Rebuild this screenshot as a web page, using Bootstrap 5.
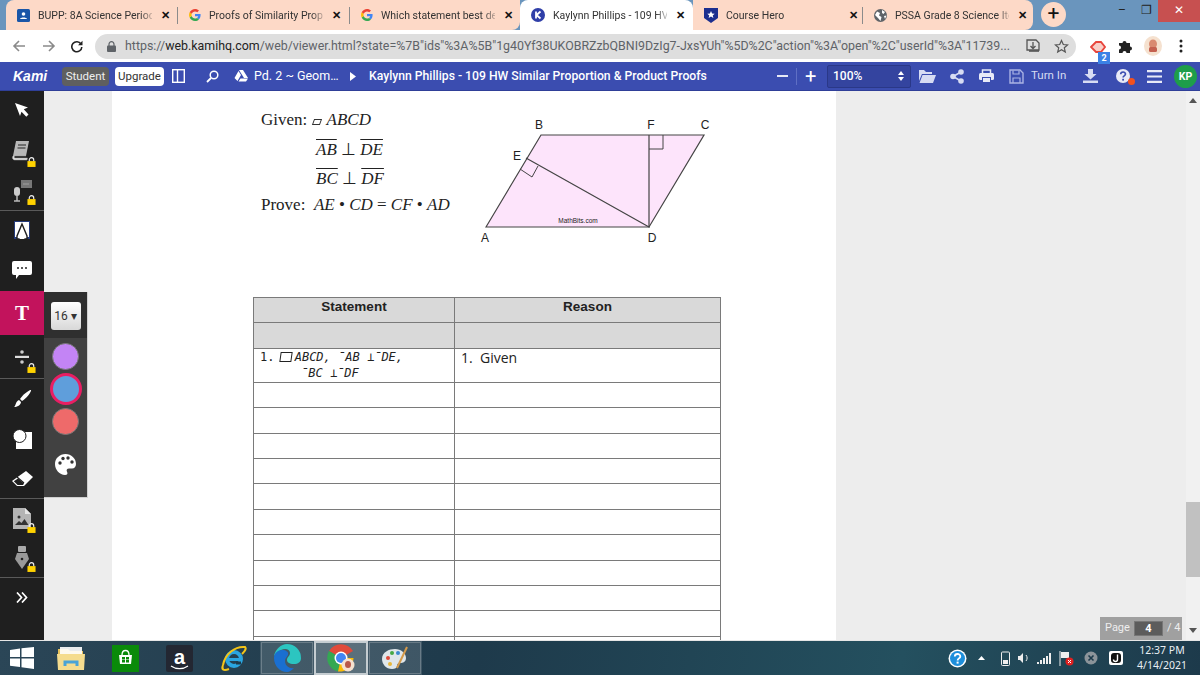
<!DOCTYPE html>
<html lang="en">
<head>
  <meta charset="UTF-8">
  <title>Kami</title>
  <link href="https://cdn.jsdelivr.net/npm/bootstrap@5.3.0/dist/css/bootstrap.min.css" rel="stylesheet">
  <style>
    html,body{height:675px;overflow:hidden}
    body{width:1200px;font-family:"Roboto",sans-serif;background:#ededed}

    /* ---------- Chrome tabs ---------- */
    .tabstrip{height:30px;background:#6a95bd;padding-left:6px}
    .gtab{height:30px;background:#fdd9c7;padding-left:11px;font:10.5px "Roboto",sans-serif;color:#333;flex:none;width:172px;position:relative}
    .gtab.first{border-radius:8px 0 0 0}
    .gtab.last{border-radius:0 8px 8px 0;width:170px}
    .gtab.tab3{border-radius:0 0 8px 0;width:170px}
    .gtab.on{background:#fff;border-radius:8px 8px 0 0;width:173px}
    .gtab.nar{width:170px}
    .gtab.sep::after{content:"";position:absolute;right:0;top:7px;height:17px;border-right:1px solid #8b8b8b}
    .gtab .lbl{width:114px;margin-left:8px;white-space:nowrap;-webkit-mask-image:linear-gradient(90deg,#000 90%,rgba(0,0,0,.25));mask-image:linear-gradient(90deg,#000 90%,rgba(0,0,0,.25))}
    .gtab .cls{font-size:11px;font-weight:700;color:#111;margin-left:9px;line-height:1}
    .newtab{width:25px;height:25px;border-radius:50%;background:#fdd9c7;margin:2px 0 0 8px;font-size:21px;line-height:23px;text-align:center;color:#111}
    .winbtns{margin-left:auto;height:22px}
    .winbtns div{width:24px;text-align:center;color:#222;font-size:12px;line-height:20px}
    .winbtns .wclose{width:42px;background:#c75050;color:#fff}

    /* ---------- Address bar ---------- */
    .addr{height:32px;background:#fff;padding-left:12px}
    .rl{margin-left:14px}
    .urlbar{margin-left:12px;width:981px;height:25px;background:#dedede;border-radius:13px;padding-left:12px;font-size:12.4px;color:#5f6368;white-space:nowrap}
    .urlbar b{font-weight:400;color:#222}
    .urlbar .utxt{margin-left:9px}
    .urlbar .utail{margin-left:auto;padding-right:7px;gap:14px}
    .extbadge{position:absolute;right:-4px;bottom:-6px;background:#3b82e6;color:#fff;font-size:9px;width:12px;height:12px;line-height:12px;text-align:center;font-weight:700}
    .m-ext{margin-left:14px}
    .m-puz{margin-left:12px}
    .m-ava{margin-left:11px}
    .m-dots{margin-left:17px}

    /* ---------- Kami toolbar ---------- */
    .kamibar{height:29px;background:#3b4db0;color:#fff;font-size:12.2px;font-weight:500;border-bottom:1px solid #2f3f98;white-space:nowrap}
    .kamilogo{margin-left:13px;font:italic 700 14px "Liberation Sans",sans-serif;width:49px}
    .pillgrey,.pillwhite{font-size:11.5px;font-weight:400;height:19px;line-height:19px;border-radius:4px;text-align:center}
    .pillgrey{background:#5f5f5f;width:47px;color:#eee}
    .pillwhite{background:#fff;color:#333;width:49px;margin-left:6px}
    .w-panel{margin-left:8px}
    .w-search{margin-left:21px}
    .w-drive{margin-left:15px}
    .crumb{margin-left:6px;width:85px;font-weight:400;font-size:12.5px}
    .w-tri{margin-left:11px}
    .doc-title{margin-left:13px;width:350px}
    .w-minus{margin-left:58px;width:11px;height:2px;background:#e6e8f5}
    .bar-sep{margin-left:8px;height:17px;border-left:1px solid #5f6fc4}
    .w-plus{margin-left:8px;font-size:20px;font-weight:400;line-height:1;width:12px}
    .zoombox{margin-left:10px;width:84px;height:23px;background:#34449f;border:1px solid #2a3888;border-radius:2px;font-size:12px;padding:0 6px 0 5px}
    .w-folder{margin-left:8px}
    .w-share{margin-left:14px}
    .w-print{margin-left:15px}
    .w-save{margin-left:15px}
    .turnin{margin-left:7px;font-size:11.5px;font-weight:400;color:#d7dbf2;width:38px}
    .w-down{margin-left:14px}
    .w-help{margin-left:18px;position:relative}
    .helpdot{position:absolute;right:-5px;bottom:-2px;width:7px;height:7px;border-radius:50%;background:#f4511e}
    .w-menu{margin-left:17px}
    .kpbadge{margin-left:12px;width:23px;height:23px;border-radius:50%;background:#1e9e4a;font-size:10.5px;font-weight:700;line-height:23px;text-align:center}

    /* ---------- Work area ---------- */
    .workarea{height:549px;position:relative;overflow:hidden}
    .toolrail{width:44px;background:#1f1f1f;flex:none;z-index:3}
    .tool{width:44px;display:flex;align-items:center;justify-content:center;position:relative}
    .h38{height:38px}.h39{height:39px}.h40{height:40px}.h42{height:42px}.h43{height:43px}.h44{height:44px}
    .tool.line{border-bottom:1px solid #5a5a5a}
    .tool.active{background:#c2135c}
    .tool .padlock{position:absolute;right:8px;bottom:5px}
    .t-glyph{font:700 21px "Liberation Serif",serif;color:#fff;line-height:1}
    .optpanel{position:absolute;left:44px;top:201px;width:44px;height:206px;background:#414141;border-right:1px solid #d0d0d0;border-bottom:1px solid #d0d0d0;z-index:2}
    .optsize{height:46px;background:#2f2f2f;padding-top:10px}
    .sizebtn{width:30px;height:28px;margin:0 auto;background:linear-gradient(#fff,#d8d8d8);border-radius:3px;font-size:12px;color:#333;line-height:28px;text-align:center}
    .swatch{width:27px;height:27px;border-radius:50%;margin:0 auto;border:1px solid #777}
    .sw1{background:#c384f5;margin-top:5px}
    .sw2{background:#5f9edb;width:32px;height:32px;border:3px solid #e91e63;margin-top:3px;margin-bottom:3px}
    .sw3{background:#ee6a6a}
    .sw4{margin-top:17px;text-align:center}
    .pagearea{flex:1;padding-left:68px;min-width:0}
    .docpage{width:724px;height:600px;background:#fff;padding-left:141px}
    .givenrow{height:206px;font:17px "Liberation Serif",serif;color:#222}
    .given{width:220px;margin-left:8px;padding-top:16px}
    .given .gl{height:29px;line-height:26px;white-space:nowrap}
    .given .gl.g1{height:30px}
    .given .gl.ind{padding-left:55px}
    .given .gl.g3{height:26px}
    .over{text-decoration:overline;text-decoration-thickness:1px}
    .para{display:inline-block;width:8px;height:6px;border:1px solid #333;transform:skewX(-20deg);margin:0 6px 0 1px}
    .figure-svg{margin-left:-4px;margin-top:9px}
    .prooftable{width:468px;table-layout:fixed;border-collapse:collapse;margin:0;font:14px "Open Sans",sans-serif;color:#222;--bs-table-bg:transparent}
    .prooftable td,.prooftable th{border:1px solid #7a7a7a;padding:0;height:25.4px}
    .prooftable .colA{width:201px}
    .prooftable .grey td,.prooftable .grey th{background:#d9d9d9}
    .prooftable th{font:700 13.5px "Liberation Sans",sans-serif;text-align:center;vertical-align:top;padding-top:1px}
    .prooftable .tall td{height:34px;vertical-align:top;padding:0 0 0 6px;line-height:17px}
    .stmt{font:italic 12px/16px "DejaVu Sans Mono",monospace;white-space:pre}
    .stmt span{font-style:normal}
    .stmt .l2{padding-left:41px}
    .sqr{display:inline-block;width:12px;height:10px;border:1px solid #222;margin:0 3px -1px -2px;transform:skewX(-8deg)}
    .scrolltrack{width:14px;position:absolute;right:0;top:0;bottom:0;background:#f1f1f1;z-index:1}
    .scrollthumb{position:absolute;left:0;right:0;top:411px;height:75px;background:#c1c1c1}
    .arrowup,.arrowdown{position:absolute;left:3px;width:0;height:0;border-left:4px solid transparent;border-right:4px solid transparent}
    .arrowup{top:7px;border-bottom:5px solid #555}
    .arrowdown{bottom:7px;border-top:5px solid #555}
    .pagebox{position:absolute;left:1100px;top:526px;width:82px;height:23px;background:#a0a0a0;color:#eee;font-size:11px;z-index:2;padding-left:5px;white-space:nowrap}
    .pagebox .num{flex:none;width:29px;height:15px;margin:0 4px;background:#5c5c5c;border:1px solid #777;text-align:center;line-height:13px;font-weight:700;color:#fff}

    /* ---------- Windows taskbar ---------- */
    .taskbar{height:35px;border-top:1px solid #e6e6e6;background:linear-gradient(100deg,#2b4657,#1e3a4b 40%,#24505f 75%,#1d3a4b);color:#e8eef2}
    .slot{width:54px;height:34px;display:flex;align-items:center;justify-content:center;flex:none}
    .slot.win{width:44px}
    .slot.box{background:rgba(255,255,255,.14);outline:1px solid rgba(255,255,255,.22);outline-offset:-2px}
    .slot.box.cur{background:rgba(255,255,255,.26);outline:2px solid rgba(255,255,255,.65)}
    .tray{margin-left:auto;gap:0}
    .tray-i{flex:none;display:flex;justify-content:center;align-items:center}
    .tw-help{width:20px}
    .tw-caret{width:10px;margin-left:9px}
    .tw-bat{width:10px;margin-left:14px}
    .tw-spk{width:12px;margin-left:7px}
    .tw-sig{width:16px;margin-left:7px}
    .tw-flag{width:16px;margin-left:6px}
    .tw-x{width:14px;margin-left:10px}
    .tw-j{width:14px;margin-left:11px}
    .clock{width:58px;margin-left:10px;margin-right:9px;font:10.5px/15px "Noto Sans",sans-serif;text-align:center}
  </style>
</head>
<body class="d-flex flex-column">
  <svg width="0" height="0" class="position-absolute">
    <symbol id="lock" viewBox="0 0 10 11"><path d="M2.5 5V3.2a2.5 2.5 0 0 1 5 0V5" fill="none" stroke="#eee" stroke-width="1.3"/><rect x="0.5" y="4.5" width="9" height="6.5" fill="#ffd200"/></symbol>
    <symbol id="gee" viewBox="0 0 12 12"><path d="M11.6 6.1c0-.4 0-.8-.1-1.1H6v2.2h3.2c-.2.7-.6 1.3-1.200 1.700l1.900 1.500c1.100-1 1.700-2.500 1.700-4.300z" fill="#4285f4"/><path d="M6 12c1.600 0 2.900-.5 3.900-1.500L8 9c-.5.4-1.200.6-2 .6-1.500 0-2.900-1-3.300-2.500l-2 1.500C1.700 10.700 3.700 12 6 12z" fill="#34a853"/><path d="M2.700 7.100a3.700 3.700 0 0 1 0-2.300l-2-1.500a6 6 0 0 0 0 5.300z" fill="#fbbc05"/><path d="M6 2.400c.9 0 1.700.3 2.300.9l1.700-1.700C9 .6 7.600 0 6 0 3.700 0 1.700 1.300.7 3.300l2 1.500C3.100 3.400 4.500 2.400 6 2.400z" fill="#ea4335"/></symbol>
  </svg>

  <!-- onglets -->
  <div class="tabstrip d-flex flex-none">
    <div class="gtab first sep d-flex align-items-center">
      <svg width="13" height="13" viewBox="0 0 13 13"><rect width="13" height="13" rx="1.500" fill="#1a56a8"/><circle cx="6.500" cy="5" r="1.800" fill="#fff"/><path d="M3 10c.3-2 6.700-2 7 0z" fill="#fff"/></svg>
      <div class="lbl">BUPP: 8A Science Period</div><div class="cls">✕</div>
    </div>
    <div class="gtab sep d-flex align-items-center">
      <svg width="12" height="12"><use href="#gee"/></svg>
      <div class="lbl">Proofs of Similarity Prop</div><div class="cls">✕</div>
    </div>
    <div class="gtab tab3 d-flex align-items-center">
      <svg width="12" height="12"><use href="#gee"/></svg>
      <div class="lbl">Which statement best de</div><div class="cls">✕</div>
    </div>
    <div class="gtab on d-flex align-items-center">
      <svg width="14" height="14" viewBox="0 0 14 14"><circle cx="7" cy="7" r="7" fill="#2f3fa8"/><path d="M5 3.500v7M9.500 3.500 5.500 7l4 3.500" stroke="#fff" stroke-width="1.800" fill="none"/></svg>
      <div class="lbl">Kaylynn Phillips - 109 HV</div><div class="cls">✕</div>
    </div>
    <div class="gtab nar sep d-flex align-items-center">
      <svg width="14" height="15" viewBox="0 0 14 15"><path d="M0 0h14v10l-7 5-7-5z" fill="#1c2f8f"/><path d="m7 3 1.100 2.500 2.600.2-2 1.700.7 2.600L7 8.600 4.600 10l.7-2.600-2-1.700 2.600-.2z" fill="#fff"/></svg>
      <div class="lbl">Course Hero</div><div class="cls">✕</div>
    </div>
    <div class="gtab last d-flex align-items-center">
      <svg width="13" height="13" viewBox="0 0 13 13"><circle cx="6.500" cy="6.500" r="6.500" fill="#5f6368"/><path d="M3 2.500 6 4 5 6.500 7.500 8 6.500 12 4 9 1 6zM8 1l3 2-1.500 2L8 4zM10 7l2.500-.5L11 10z" fill="#fff"/></svg>
      <div class="lbl">PSSA Grade 8 Science Ite</div><div class="cls">✕</div>
    </div>
    <div class="newtab">+</div>
    <div class="winbtns d-flex">
      <div>–</div>
      <div>❐</div>
      <div class="wclose">✕</div>
    </div>
  </div>

  <!-- barre d'adresse -->
  <div class="addr d-flex align-items-center flex-none">
    <svg width="14" height="14" viewBox="0 0 14 14"><path d="M13 7H2M7 2 2 7l5 5" fill="none" stroke="#8a8a8a" stroke-width="1.600"/></svg>
    <svg class="ms-3" width="14" height="14" viewBox="0 0 14 14"><path d="M1 7h11M7 2l5 5-5 5" fill="none" stroke="#8a8a8a" stroke-width="1.600"/></svg>
    <svg class="rl" width="13" height="13" viewBox="0 0 13 13"><path d="M11 4a5 5 0 1 0 .8 3" fill="none" stroke="#222" stroke-width="1.600"/><path d="M12.500 .8v4.400H8z" fill="#222"/></svg>
    <div class="urlbar d-flex align-items-center">
      <svg width="9" height="11" viewBox="0 0 9 11"><path d="M2 5V3.200a2.500 2.500 0 0 1 5 0V5" fill="none" stroke="#5f6368" stroke-width="1.200"/><rect y="4.500" width="9" height="6.500" rx="1" fill="#5f6368"/></svg>
      <div class="utxt">https://<b>web.kamihq.com</b>/web/viewer.html?state=%7B"ids"%3A%5B"1g40Yf38UKOBRZzbQBNI9DzIg7-JxsYUh"%5D%2C"action"%3A"open"%2C"userId"%3A"11739...</div>
      <div class="utail d-flex align-items-center">
        <svg width="14" height="14" viewBox="0 0 14 14"><path d="M1 1h9l3 3v7H1z" fill="none" stroke="#555" stroke-width="1.300"/><path d="M7 3v6M4.500 7 7 9.500 9.500 7" fill="none" stroke="#555" stroke-width="1.300"/><path d="M3 12h10" stroke="#555" stroke-width="1.600"/></svg>
        <svg width="15" height="15" viewBox="0 0 15 15"><path d="m7.500 1.500 1.800 4 4.300.4-3.300 2.900 1 4.200-3.800-2.200-3.800 2.200 1-4.200L1.400 5.900l4.300-.4z" fill="none" stroke="#555" stroke-width="1.200"/></svg>
      </div>
    </div>
    <div class="position-relative m-ext">
      <svg width="16" height="14" viewBox="0 0 16 14"><path d="M1 7 6 2h5l4 5-4 5H6z" fill="#f8cfc8" stroke="#e8453c" stroke-width="1.800"/></svg>
      <span class="extbadge">2</span>
    </div>
    <svg class="m-puz" width="15" height="15" viewBox="0 0 15 15"><path d="M1 4h3.500a2 2 0 1 1 4 0H12v3.500a2 2 0 1 1 0 4V14H8.500a2 2 0 1 0-4 0H1v-3.500a2 2 0 1 0 0-4z" fill="#222"/></svg>
    <svg class="m-ava" width="18" height="20" viewBox="0 0 18 20"><ellipse cx="9" cy="10" rx="9" ry="10" fill="#f5e1cf"/><ellipse cx="9" cy="8" rx="4" ry="4.500" fill="#d98a70"/><rect x="5" y="11" width="8" height="5" rx="1.500" fill="#c4604f"/></svg>
    <svg class="m-dots" width="4" height="14" viewBox="0 0 4 14"><circle cx="2" cy="2" r="1.500" fill="#222"/><circle cx="2" cy="7" r="1.500" fill="#222"/><circle cx="2" cy="12" r="1.500" fill="#222"/></svg>
  </div>

  <!-- barre Kami -->
  <div class="kamibar d-flex align-items-center flex-none">
    <div class="kamilogo">Kami</div>
    <div class="pillgrey">Student</div>
    <div class="pillwhite">Upgrade</div>
    <svg class="w-panel" width="13" height="14" viewBox="0 0 13 14"><rect x=".7" y=".7" width="11.600" height="12.600" fill="none" stroke="#fff" stroke-width="1.400"/><path d="M5.500 1v12" stroke="#fff" stroke-width="1.400"/></svg>
    <svg class="w-search" width="13" height="13" viewBox="0 0 13 13"><circle cx="8" cy="5" r="3.800" fill="none" stroke="#fff" stroke-width="1.500"/><path d="M5 8 1 12" stroke="#fff" stroke-width="1.800"/></svg>
    <svg class="w-drive" width="14" height="12" viewBox="0 0 14 12"><path d="M5 0h4l5 8H10zM4.500 1 7 5 3.500 11 .5 8zM4.500 11.500l2-3H14l-2 3z" fill="#fff"/></svg>
    <div class="crumb">Pd. 2 ~ Geom…</div>
    <svg class="w-tri" width="6" height="9" viewBox="0 0 6 9"><path d="M0 0l6 4.500L0 9z" fill="#fff"/></svg>
    <div class="doc-title">Kaylynn Phillips - 109 HW Similar Proportion &amp; Product Proofs</div>
    <div class="w-minus"></div>
    <div class="bar-sep"></div>
    <div class="w-plus">+</div>
    <div class="zoombox d-flex align-items-center justify-content-between">
      <span>100%</span>
      <svg width="6" height="10" viewBox="0 0 6 10"><path d="M3 0l3 4H0zM3 10l3-4H0z" fill="#fff"/></svg>
    </div>
    <svg class="w-folder" width="17" height="14" viewBox="0 0 17 14"><path d="M0 1h5l2 2h6v2H3L0 12z" fill="#d7dcf3"/><path d="M3.500 6H17l-3 8H.5z" fill="#d7dcf3"/></svg>
    <svg class="w-share" width="14" height="15" viewBox="0 0 14 15"><path d="M11 3 3 7.500l8 4.500" fill="none" stroke="#d7dcf3" stroke-width="1.600"/><circle cx="11" cy="3" r="2.800" fill="#d7dcf3"/><circle cx="3" cy="7.500" r="2.800" fill="#d7dcf3"/><circle cx="11" cy="12" r="2.800" fill="#d7dcf3"/></svg>
    <svg class="w-print" width="15" height="14" viewBox="0 0 15 14"><path d="M3.500 4V1h8v3" fill="none" stroke="#e8eaf7" stroke-width="1.500"/><rect y="4" width="15" height="7" rx="1.500" fill="#e8eaf7"/><rect x="3.500" y="8.500" width="8" height="5" fill="#e8eaf7" stroke="#3b4db0"/></svg>
    <svg class="w-save" width="15" height="15" viewBox="0 0 15 15"><path d="M1 1h10l3 3v10H1z" fill="none" stroke="#aab3e4" stroke-width="1.400"/><path d="M4 1.500v3.500h6V1.500M4 14V9h7v5" fill="none" stroke="#aab3e4" stroke-width="1.200"/></svg>
    <div class="turnin">Turn In</div>
    <svg class="w-down" width="15" height="14" viewBox="0 0 15 14"><path d="M5 0h5v5h3.500l-6 5.500-6-5.500H5z" fill="#d7dcf3"/><rect y="11.500" width="15" height="2.500" fill="#d7dcf3"/></svg>
    <div class="w-help d-flex">
      <svg width="14" height="14" viewBox="0 0 14 14"><circle cx="7" cy="7" r="7" fill="#e8eaf7"/><path d="M4.700 5.300c0-3 4.800-3 4.800-.2 0 1.800-2.400 1.800-2.400 3.400" fill="none" stroke="#3b4db0" stroke-width="1.600"/><rect x="6.200" y="9.800" width="1.800" height="1.800" fill="#3b4db0"/></svg>
      <span class="helpdot"></span>
    </div>
    <svg class="w-menu" width="15" height="13" viewBox="0 0 15 13"><path d="M0 1.200h15M0 6.500h15M0 11.800h15" stroke="#e8eaf7" stroke-width="2.200"/></svg>
    <div class="kpbadge">KP</div>
  </div>

  <!-- zone de travail -->
  <div class="workarea d-flex flex-none">
    <div class="toolrail">
      <div class="tool h38"><svg width="16" height="16" viewBox="0 0 16 16"><path d="M1 1l13 4.500-4.200 1.800 4.700 5.200-2.200 2.200-4.800-5L6 14z" fill="#fff"/></svg></div>
      <div class="tool h43"><svg width="24" height="24" viewBox="0 0 24 24"><path d="M6 2h13l-3 15H3z" fill="#b8b8b8"/><path d="M3 17c-1.500 2 0 4 2 4h12l.5-2H5c-1 0-1-2 0-2h11" fill="#ddd" stroke="#999" stroke-width=".5"/><path d="M8 6h8M7.500 9h8" stroke="#555" stroke-width="1.300"/></svg><svg class="padlock" width="9" height="10"><use href="#lock"/></svg></div>
      <div class="tool h39 line"><svg width="24" height="24" viewBox="0 0 24 24"><rect x="11" y="1" width="11" height="8" fill="#777"/><path d="M13.500 5h6" stroke="#ccc" stroke-dasharray="1 1"/><rect x="4" y="8" width="6" height="9" rx="3" fill="#ccc"/><path d="M7 17v5M4 22h6" stroke="#bbb" stroke-width="1.500"/></svg><svg class="padlock" width="9" height="10"><use href="#lock"/></svg></div>
      <div class="tool h38"><svg width="16" height="18" viewBox="0 0 16 18"><path d="M0 0h16v18H0z" fill="#243a7a"/><path d="M1 1h14v15H1z" fill="#fff"/><path d="M8 3 3 15v3h10v-3z" fill="#fff" stroke="#1f1f1f" stroke-width="1.400"/><path d="M5.500 18 8 9l2.500 9z" fill="#fff"/></svg></div>
      <div class="tool h42"><svg width="20" height="18" viewBox="0 0 20 18"><path d="M2 0h16a2 2 0 0 1 2 2v10a2 2 0 0 1-2 2H7l-3 4v-4H2a2 2 0 0 1-2-2V2a2 2 0 0 1 2-2z" fill="#fff"/><circle cx="6" cy="7" r="1" fill="#222"/><circle cx="10" cy="7" r="1" fill="#222"/><circle cx="14" cy="7" r="1" fill="#222"/></svg></div>
      <div class="tool h44 active"><span class="t-glyph">T</span></div>
      <div class="tool h44 line"><svg width="14" height="14" viewBox="0 0 14 14"><circle cx="7" cy="2" r="1.800" fill="#ccc"/><rect y="5.800" width="14" height="2.200" fill="#ddd"/><circle cx="7" cy="12" r="1.800" fill="#ccc"/></svg><svg class="padlock" width="9" height="10"><use href="#lock"/></svg></div>
      <div class="tool h40"><svg width="20" height="20" viewBox="0 0 20 20"><path d="M19 1c1 1-5 9-9 11l-2-2C10 6 18 0 19 1z" fill="#fff"/><path d="M7 11l2 2c0 3-4 5-7 5 2-1 1-5 5-7z" fill="#fff"/></svg></div>
      <div class="tool h40"><svg width="21" height="21" viewBox="0 0 21 21"><path d="M10 3h10v17H4v-9" fill="#fff"/><circle cx="7.500" cy="7" r="6.500" fill="#fff" stroke="#1f1f1f"/></svg></div>
      <div class="tool h40 line"><svg width="21" height="16" viewBox="0 0 21 16"><path d="M14 0l7 6-9 9H5L0 10z" fill="#fff"/><path d="M5 6l7 6" stroke="#1f1f1f" stroke-width="1.200"/><path d="M6 7.500 1.800 10.300 5.600 14H11l1-1.500z" fill="#1f1f1f"/></svg></div>
      <div class="tool h39"><svg width="20" height="23" viewBox="0 0 20 23"><path d="M1 1h12l6 6v15H1z" fill="#b4b4b4"/><path d="M13 1v6h6" fill="#e6e6e6"/><circle cx="7" cy="10" r="1.500" fill="#333"/><path d="M3 18l4-4 2.500 2 3-4 4 6z" fill="#333"/></svg><svg class="padlock" width="9" height="10"><use href="#lock"/></svg></div>
      <div class="tool h40 line"><svg width="14" height="24" viewBox="0 0 14 24"><rect x="3" y="0" width="8" height="6" rx="1" fill="#aaa"/><path d="M2 7h10l2 6-7 10-7-10z" fill="#999"/><circle cx="7" cy="13" r="1.300" fill="#222"/></svg><svg class="padlock" width="9" height="10"><use href="#lock"/></svg></div>
      <div class="tool h38"><svg width="12" height="11" viewBox="0 0 12 11"><path d="M1 .5 5.500 5.500 1 10.500M6 .5l4.500 5L6 10.500" fill="none" stroke="#fff" stroke-width="1.700"/></svg></div>
    </div>

    <div class="optpanel">
      <div class="optsize"><div class="sizebtn">16 ▾</div></div>
      <div class="swatch sw1"></div>
      <div class="swatch sw2"></div>
      <div class="swatch sw3"></div>
      <div class="sw4"><svg width="21" height="21" viewBox="0 0 21 21"><path d="M10.500 0C4.700 0 0 4.400 0 10c0 5.800 4.700 11 10 11 2.500 0 3-1.800 2-3.300-1-1.700 0-3.200 2-3.200h3c2.500 0 4-2 4-4.500C21 4.500 16.300 0 10.500 0z" fill="#fff"/><circle cx="5" cy="9" r="1.700" fill="#333"/><circle cx="8" cy="4.500" r="1.700" fill="#333"/><circle cx="13" cy="4" r="1.700" fill="#333"/><circle cx="17" cy="8" r="1.700" fill="#333"/></svg></div>
    </div>

    <div class="pagearea">
      <div class="docpage">
        <div class="givenrow d-flex">
          <div class="given">
            <div class="gl g1">Given: <span class="para"></span><i>ABCD</i></div>
            <div class="gl ind"><i class="over">AB</i> ⊥ <i class="over">DE</i></div>
            <div class="gl ind g3"><i class="over">BC</i> ⊥ <i class="over">DF</i></div>
            <div class="gl">Prove:&nbsp; <i>AE</i> • <i>CD</i> = <i>CF</i> • <i>AD</i></div>
          </div>
          <svg class="figure-svg" width="240" height="150" viewBox="476 100 240 150">
            <path d="M485 227 540 135H703L648 227z" fill="#fde4fb" stroke="#444" stroke-width="1.200"/>
            <path d="M525 158 648 227V135" fill="none" stroke="#444" stroke-width="1.200"/>
            <path d="M648 149h14v-14M537 166l-6 11-12-8" fill="none" stroke="#444" stroke-width="1"/>
            <g font-family="Liberation Sans,sans-serif" font-size="12" fill="#222" text-anchor="middle">
              <text x="538" y="129">B</text><text x="650" y="129">F</text><text x="704" y="129">C</text>
              <text x="516" y="160">E</text><text x="484" y="242">A</text><text x="651" y="242">D</text>
              <text x="577" y="223" font-size="6.500">MathBits.com</text>
            </g>
          </svg>
        </div>
        <table class="prooftable table">
          <tbody>
            <tr class="grey"><th class="colA">Statement</th><th>Reason</th></tr>
            <tr class="grey"><td></td><td></td></tr>
            <tr class="tall">
              <td><div class="stmt"><span>1. </span><span class="sqr"></span>ABCD, ¯AB ⊥¯DE,<div class="l2">¯BC ⊥¯DF</div></div></td>
              <td>1.&nbsp; Given</td>
            </tr>
            <tr><td></td><td></td></tr>
            <tr><td></td><td></td></tr>
            <tr><td></td><td></td></tr>
            <tr><td></td><td></td></tr>
            <tr><td></td><td></td></tr>
            <tr><td></td><td></td></tr>
            <tr><td></td><td></td></tr>
            <tr><td></td><td></td></tr>
            <tr><td></td><td></td></tr>
            <tr><td></td><td></td></tr>
            <tr><td></td><td></td></tr>
          </tbody>
        </table>
      </div>
    </div>

    <div class="scrolltrack"><span class="arrowup"></span><div class="scrollthumb"></div><span class="arrowdown"></span></div>
    <div class="pagebox d-flex align-items-center">Page<span class="num">4</span>/ 4</div>
  </div>

  <!-- barre des tâches -->
  <div class="taskbar d-flex align-items-center flex-none">
    <div class="slot win"><svg width="24" height="22" viewBox="0 0 24 22"><path d="M0 3l10-1.500V10H0zM11.500 1.300 24 0v10H11.500zM0 11.500h10v8.500L0 18.800zM11.500 11.500H24V22l-12.500-1.700z" fill="#fff"/></svg></div>
    <div class="slot"><svg width="28" height="25" viewBox="0 0 28 25"><path d="M1 3h10l2 2h13v18H1z" fill="#e8c25c"/><rect x="3" y="1" width="22" height="8" fill="#fff" opacity=".9"/><path d="M0 8h28l-1 16H1z" fill="#f5dc8e"/><path d="M8 20v-4h12v4" fill="none" stroke="#4aa3d6" stroke-width="3"/></svg></div>
    <div class="slot"><svg width="27" height="27" viewBox="0 0 27 27"><rect width="27" height="27" fill="#0a8a0a"/><path d="M7 10h13l-1 9H8z" fill="#fff"/><path d="M10 10c0-6 7-6 7 0" fill="none" stroke="#fff" stroke-width="1.300"/><path d="M10 12h3v2.500h-3zM14 12h3v2.500h-3zM10 15h3v2.500h-3zM14 15h3v2.500h-3z" fill="#0a8a0a"/></svg></div>
    <div class="slot"><svg width="27" height="27" viewBox="0 0 27 27"><rect width="27" height="27" rx="2" fill="#232732"/><text x="13.500" y="19" font-family="Liberation Sans,sans-serif" font-size="20" font-weight="700" fill="#fff" text-anchor="middle">a</text><path d="M5 21c5 3.500 12 3.500 17 0" fill="none" stroke="#fff" stroke-width="1.200"/></svg></div>
    <div class="slot"><svg width="27" height="27" viewBox="0 0 27 27"><circle cx="14" cy="14" r="7" fill="none" stroke="#2aa5e0" stroke-width="4"/><path d="M7 14.500h14" stroke="#2aa5e0" stroke-width="3"/><path d="M21 18h-5" stroke="#1d3a4b" stroke-width="3"/><path d="M3 20C5 9 15 1 25 2c2 2-1 5-3 7" fill="none" stroke="#f5c518" stroke-width="2"/><path d="M3 20c-2 5 1 6 6 4" fill="none" stroke="#f5c518" stroke-width="2"/></svg></div>
    <div class="slot box"><svg width="28" height="28" viewBox="0 0 28 28"><path d="M14 0a14 14 0 0 1 14 14c0 4-3 6-7 6-5 0-7-2-7-4 0-3 3-4 3-7 0-4-5-5-9-3a14 14 0 0 0-7 6C2.500 5 8 0 14 0z" fill="#2cc5c0"/><path d="M1 14c0-5 4-8 8-8s7 2 6 5c-1 2-3 3-3 6 0 5 5 8 9 7-2 2-4.500 4-7 4C7 28 1 22 1 14z" fill="#1a6fd0"/></svg></div>
    <div class="slot box cur position-relative"><svg width="28" height="28" viewBox="0 0 28 28"><path d="M14 14 2 7a14 14 0 0 1 24 0z" fill="#e04a3a"/><path d="M14 14 2 7a14 14 0 0 0 9 20.500z" fill="#34a853"/><path d="M14 14h12.500A14 14 0 0 1 11 27.500z" fill="#fbbc05"/><circle cx="14" cy="14" r="6.500" fill="#fff"/><circle cx="14" cy="14" r="5" fill="#4285f4"/><circle cx="21" cy="21" r="6.500" fill="#f5e1cf"/><ellipse cx="21" cy="20.500" rx="3" ry="3.500" fill="#b9584a"/></svg></div>
    <div class="slot box"><svg width="28" height="28" viewBox="0 0 28 28"><path d="M1 15C1 8 8 5 14 5c6 0 11 4 11 9 0 4-3 5-6 5-2 0-3 1-3 3 0 2-2 3-5 3-6 0-10-5-10-10z" fill="#dfe6ea"/><circle cx="7" cy="14" r="2" fill="#e04a3a"/><circle cx="11" cy="9" r="2" fill="#45a845"/><circle cx="17" cy="9" r="2" fill="#3a8ad0"/><circle cx="9" cy="20" r="2" fill="#e8b73a"/><path d="M16 24 26 3" stroke="#d49a4a" stroke-width="2"/></svg></div>

    <div class="tray d-flex align-items-center">
      <div class="tray-i tw-help"><svg width="19" height="19" viewBox="0 0 19 19"><circle cx="9.500" cy="9.500" r="9" fill="#fff"/><circle cx="9.500" cy="9.500" r="7.500" fill="#1e8fdc"/><path d="M6.800 7.500c0-3.300 5.500-3.300 5.500-.1 0 2-2.700 2-2.700 4" fill="none" stroke="#fff" stroke-width="1.800"/><rect x="8.600" y="12.600" width="2" height="2" fill="#fff"/></svg></div>
      <div class="tray-i tw-caret"><svg width="7" height="4" viewBox="0 0 7 4"><path d="M3.500 0 7 4H0z" fill="#fff"/></svg></div>
      <div class="tray-i tw-bat"><svg width="9" height="15" viewBox="0 0 9 15"><rect x=".5" y="1" width="8" height="13.500" rx="1" fill="none" stroke="#eee"/><rect x="2" y="9" width="5" height="4" fill="#eee"/></svg></div>
      <div class="tray-i tw-spk"><svg width="11" height="12" viewBox="0 0 11 12"><path d="M0 4h2l3-3v10L2 8H0z" fill="#eee"/><path d="M8 3c1.500 2 1.500 4 0 6" fill="none" stroke="#eee"/></svg></div>
      <div class="tray-i tw-sig"><svg width="14" height="11" viewBox="0 0 14 11"><path d="M0 9h2v2H0zM3 7h2v4H3zM6 5h2v6H6zM9 3h2v8H9zM12 0h2v11h-2z" fill="#eee"/></svg></div>
      <div class="tray-i tw-flag"><svg width="15" height="15" viewBox="0 0 15 15"><path d="M1 0v15" stroke="#eee"/><path d="M2 1h8v6H2z" fill="#eee"/><circle cx="10.500" cy="10.500" r="4" fill="#e02020"/><path d="m9 9 3 3m0-3-3 3" stroke="#fff"/></svg></div>
      <div class="tray-i tw-x"><svg width="14" height="14" viewBox="0 0 14 14"><circle cx="7" cy="7" r="6.500" fill="#8c949a"/><path d="m4.500 4.500 5 5m0-5-5 5" stroke="#1d3a4b" stroke-width="1.600"/></svg></div>
      <div class="tray-i tw-j"><svg width="14" height="14" viewBox="0 0 14 14"><rect width="14" height="14" rx="2" fill="#fff"/><rect x="2" y="2" width="10" height="10" rx="3" fill="#111"/><path d="M8.500 3.500v5a2 2 0 0 1-4 0" fill="none" stroke="#fff" stroke-width="1.400"/></svg></div>
      <div class="clock">12:37 PM<br>4/14/2021</div>
    </div>
  </div>

  <script src="https://cdn.jsdelivr.net/npm/bootstrap@5.3.0/dist/js/bootstrap.bundle.min.js"></script>
</body>
</html>
